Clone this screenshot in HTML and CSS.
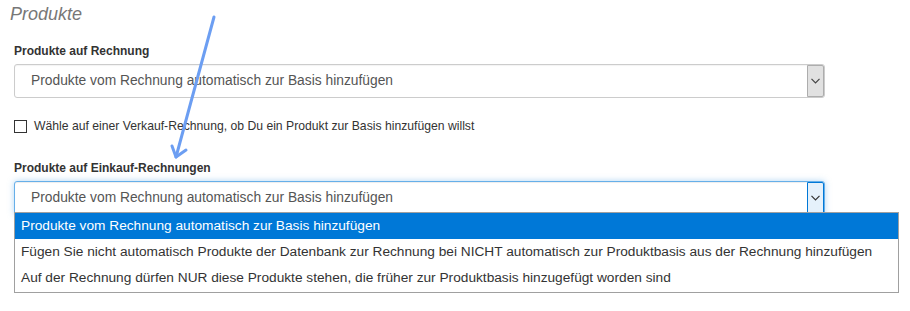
FILE: index.html
```html
<!DOCTYPE html>
<html lang="de">
<head>
    <meta charset="UTF-8">
    <title>Produkte</title>
    <link rel="stylesheet" href="styles.css">
</head>
<body>
    <div class="panel">
        <div class="title">Produkte</div>

        <div class="form">
            <div class="label">Produkte auf Rechnung</div>
            <div class="select">
                <span class="select-text">Produkte vom Rechnung automatisch zur Basis hinzufügen</span>
                <span class="select-btn"><svg width="9" height="6" viewBox="0 0 9 6"><path d="M0.5 0.8 L4.5 4.8 L8.5 0.8" fill="none" stroke="#444" stroke-width="1.2"/></svg></span>
            </div>

            <label class="check-row">
                <span class="check-box"></span>
                <span>Wähle auf einer Verkauf-Rechnung, ob Du ein Produkt zur Basis hinzufügen willst</span>
            </label>

            <div class="label label-second">Produkte auf Einkauf-Rechnungen</div>
            <div class="select-wrap">
                <div class="select focused">
                    <span class="select-text">Produkte vom Rechnung automatisch zur Basis hinzufügen</span>
                    <span class="select-btn"><svg width="9" height="6" viewBox="0 0 9 6"><path d="M0.5 0.8 L4.5 4.8 L8.5 0.8" fill="none" stroke="#333" stroke-width="1.2"/></svg></span>
                </div>
                <ul class="dropdown">
                    <li class="active">Produkte vom Rechnung automatisch zur Basis hinzufügen</li>
                    <li>Fügen Sie nicht automatisch Produkte der Datenbank zur Rechnung bei NICHT automatisch zur Produktbasis aus der Rechnung hinzufügen</li>
                    <li>Auf der Rechnung dürfen NUR diese Produkte stehen, die früher zur Produktbasis hinzugefügt worden sind</li>
                </ul>
            </div>
        </div>

        <svg class="annotation" width="910" height="311" viewBox="0 0 910 311">
            <path d="M214 17 L176 157" fill="none" stroke="#6c9ef2" stroke-width="3" stroke-linecap="round"/>
            <path d="M172 146 L176 157 L186 150" fill="none" stroke="#6c9ef2" stroke-width="3" stroke-linecap="round" stroke-linejoin="round"/>
        </svg>
    </div>
</body>
</html>
```

FILE: styles.css
```css
body, html {
    margin: 0;
    padding: 0;
    background-color: #ffffff;
    font-family: "Liberation Sans", Arial, sans-serif;
}

.panel {
    position: relative;
    width: 910px;
    height: 311px;
    overflow: hidden;
}

.title {
    padding: 3px 0 0 10px;
    font-size: 18px;
    line-height: 22px;
    font-style: italic;
    color: #777;
}

.form {
    padding: 0 85px 0 14px;
}

.label {
    margin-top: 19px;
    font-size: 12px;
    font-weight: bold;
    line-height: 14px;
    color: #333;
}

.label-second {
    margin-top: 28px;
}

.select {
    display: flex;
    height: 32px;
    margin-top: 6px;
    border: 1px solid #ccc;
    border-radius: 3px;
    background-color: #fff;
    box-shadow: inset 0 1px 1px rgba(0, 0, 0, 0.05);
}

.select-text {
    flex: 1;
    padding-left: 16px;
    font-size: 13.8px;
    line-height: 32px;
    color: #555;
}

.select-btn {
    display: flex;
    align-items: center;
    justify-content: center;
    width: 15px;
    border: 1px solid #adadad;
    border-radius: 0 2px 2px 0;
    background-color: #e1e1e1;
}

.select.focused {
    border-color: #66afe9;
    box-shadow: inset 0 1px 1px rgba(0, 0, 0, 0.075), 0 0 6px rgba(102, 175, 233, 0.5);
}

.select.focused .select-btn {
    border-color: #0078d7;
    background-color: #e5f1fb;
}

.check-row {
    display: flex;
    align-items: center;
    gap: 7px;
    margin-top: 21px;
    font-size: 12.2px;
    line-height: 14px;
    color: #333;
}

.check-box {
    width: 11px;
    height: 11px;
    border: 1px solid #333;
    background-color: #fff;
}

.select-wrap {
    position: relative;
}

.dropdown {
    position: absolute;
    top: 31px;
    left: 0;
    width: 883px;
    margin: 0;
    padding: 0 0 1px;
    list-style: none;
    border: 1px solid #a0a0a0;
    background-color: #fff;
}

.dropdown li {
    height: 26px;
    padding-left: 6px;
    font-size: 13.7px;
    line-height: 26px;
    color: #333;
    white-space: nowrap;
}

.dropdown li.active {
    background-color: #0078d7;
    color: #fff;
}

.annotation {
    position: absolute;
    top: 0;
    left: 0;
    pointer-events: none;
}
```
